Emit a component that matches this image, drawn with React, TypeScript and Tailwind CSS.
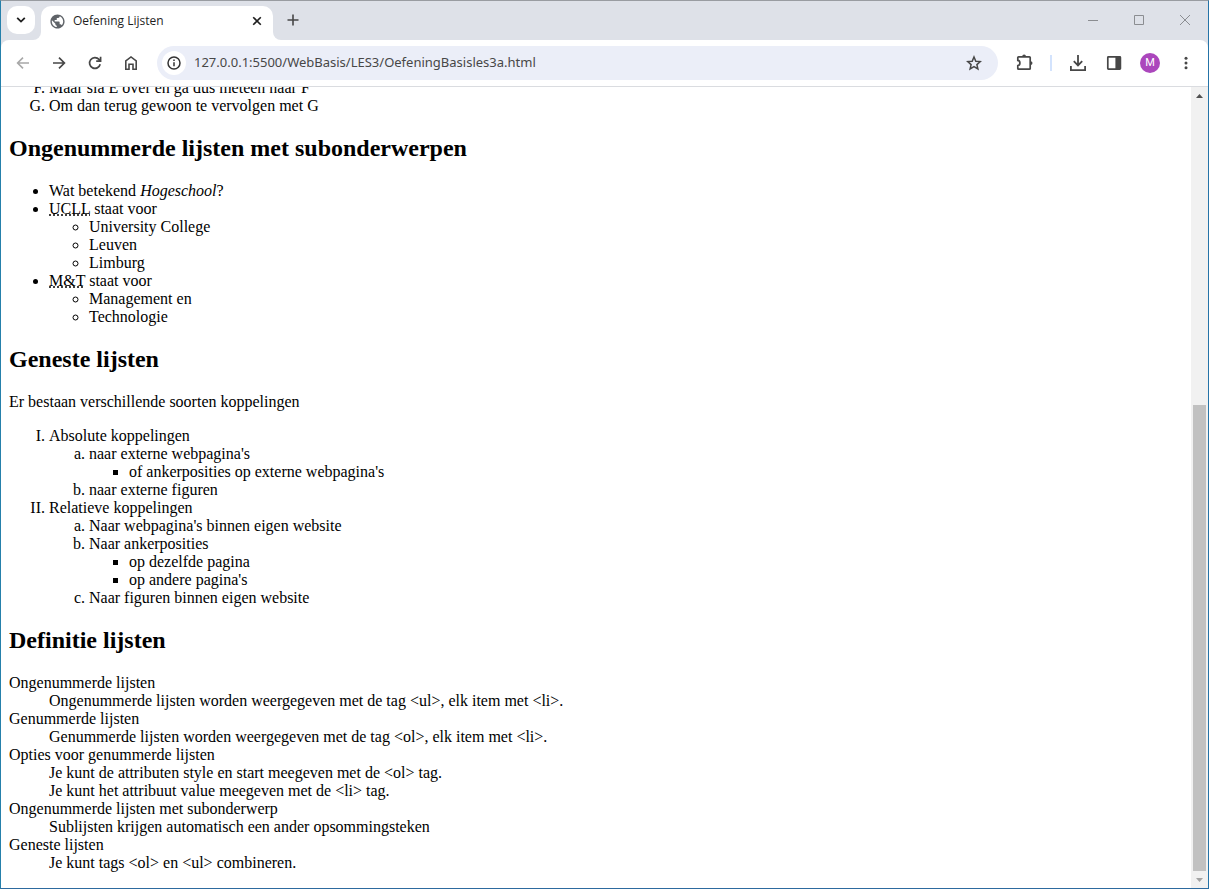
import type { ReactNode } from 'react'
import { MdPublic } from 'react-icons/md'

function IconButton({ label, className = '', children }: { label: string; className?: string; children: ReactNode }) {
  return (
    <button type="button" aria-label={label} className={`flex size-7 shrink-0 items-center justify-center ${className}`}>
      {children}
    </button>
  )
}

function TabStrip() {
  return (
    <header className="flex h-[39px] shrink-0 items-stretch bg-[#dee1e8] text-[#1f1f1f]">
      <div className="w-10 shrink-0 bg-white">
        <div className="flex h-full justify-center rounded-br-lg bg-[#dee1e8] pt-[5px]">
          <button type="button" aria-label="Tabbladen zoeken" className="flex size-7 items-center justify-center rounded-[10px] bg-white">
            <svg width="10" height="6" viewBox="0 0 10 6" fill="none" stroke="currentColor" strokeWidth="1.8">
              <path d="M1.2 0.8 5 4.6 8.8 0.8" />
            </svg>
          </button>
        </div>
      </div>
      <div className="mt-[5px] flex w-[232px] items-center rounded-t-[10px] bg-white pr-2.5 pb-1 pl-2">
        <MdPublic size={17} color="#5f6368" />
        <span className="ml-[7px] flex-1 truncate font-['Open_Sans',sans-serif] text-xs">Oefening Lijsten</span>
        <button type="button" aria-label="Tabblad sluiten" className="flex size-3 items-center justify-center">
          <svg width="10" height="10" viewBox="0 0 10 10" stroke="currentColor" strokeWidth="1.6">
            <path d="M1.2 1.2 8.8 8.8M8.8 1.2 1.2 8.8" />
          </svg>
        </button>
      </div>
      <div className="flex-1 bg-white">
        <div className="flex h-full rounded-bl-lg bg-[#dee1e8]">
          <IconButton label="Nieuw tabblad" className="mt-[5px] ml-1.5">
            <svg width="12" height="12" viewBox="0 0 12 12" stroke="#474747" strokeWidth="1.6">
              <path d="M6 0.5V11.5M0.5 6H11.5" />
            </svg>
          </IconButton>
          <div className="ml-auto flex h-[38px] text-[#8b8d91]">
            <button type="button" aria-label="Minimaliseren" className="flex w-[46px] items-center justify-center">
              <svg width="10" height="10" viewBox="0 0 10 10" stroke="currentColor"><path d="M0 5.5H10" /></svg>
            </button>
            <button type="button" aria-label="Maximaliseren" className="flex w-[46px] items-center justify-center">
              <svg width="10" height="10" viewBox="0 0 10 10" fill="none" stroke="currentColor"><path d="M.5.5H9.5V9.5H.5Z" /></svg>
            </button>
            <button type="button" aria-label="Sluiten" className="flex w-[46px] items-center justify-center">
              <svg width="10" height="10" viewBox="0 0 10 10" stroke="currentColor"><path d="M0 0 10 10M10 0 0 10" /></svg>
            </button>
          </div>
        </div>
      </div>
    </header>
  )
}

function Toolbar() {
  return (
    <div className="bg-[#dee1e8]">
      <nav className="flex h-[47px] items-center rounded-t-lg border-b border-[#dadce0] bg-white px-2 text-[#474747]">
        <div className="flex shrink-0 gap-2">
          <IconButton label="Terug" className="text-[#a8a8a8]">
            <svg width="16" height="16" viewBox="0 0 16 16" fill="none" stroke="currentColor" strokeWidth="1.6">
              <path d="M14 8H2.8M8 2.6 2.6 8 8 13.4" />
            </svg>
          </IconButton>
          <IconButton label="Vooruit">
            <svg width="16" height="16" viewBox="0 0 16 16" fill="none" stroke="currentColor" strokeWidth="1.7">
              <path d="M2 8H13.2M8 2.6 13.4 8 8 13.4" />
            </svg>
          </IconButton>
          <IconButton label="Vernieuwen">
            <svg width="16" height="16" viewBox="0 0 16 16" fill="none" stroke="currentColor" strokeWidth="1.7">
              <path d="M13.2 9.3A5.4 5.4 0 1 1 12 4.4L13.4 5.9M13.6 1.8V6.2H9.2" />
            </svg>
          </IconButton>
          <IconButton label="Startpagina">
            <svg width="16" height="16" viewBox="0 0 16 16" fill="none" stroke="currentColor" strokeWidth="1.6">
              <path d="M2.8 14.2V5.9L8 1.9 13.2 5.9V14.2H10V9.2H6V14.2Z" />
            </svg>
          </IconButton>
        </div>
        <div className="ml-3 flex h-[34px] min-w-0 flex-1 items-center rounded-full bg-[#ebeef8] pr-2.5 pl-[5px]">
          <button type="button" aria-label="Sitegegevens bekijken" className="flex size-6 shrink-0 items-center justify-center rounded-full bg-white">
            <svg width="14" height="14" viewBox="0 0 14 14" fill="none" stroke="#333" strokeWidth="1.5">
              <circle cx="7" cy="7" r="6" />
              <path d="M7 6.2V10.2M7 3.6V5.1" />
            </svg>
          </button>
          <input
            type="text"
            aria-label="Adresbalk"
            defaultValue="127.0.0.1:5500/WebBasis/LES3/OefeningBasisles3a.html"
            className="ml-2 min-w-0 flex-1 bg-transparent font-['Noto_Sans',sans-serif] text-[13px] text-[#474747] outline-none"
          />
          <IconButton label="Bladwijzer toevoegen">
            <svg width="16" height="16" viewBox="0 0 16 16" fill="none" stroke="currentColor" strokeWidth="1.5">
              <path d="M8 2 9.8 6.2 14.3 6.6 10.9 9.6 11.9 14 8 11.7 4.1 14 5.1 9.6 1.7 6.6 6.2 6.2Z" />
            </svg>
          </IconButton>
        </div>
        <div className="ml-3 flex shrink-0 items-center">
          <IconButton label="Extensies">
            <svg width="18" height="18" viewBox="0 0 18 18" fill="none" stroke="currentColor" strokeWidth="1.7">
              <path d="M3.6 2.8H14.4Q15.2 2.8 15.2 3.6V14.4Q15.2 15.2 14.4 15.2H3.6Q2.8 15.2 2.8 14.4V11.7C5.6 11.3 5.6 6.8 2.8 6.4V3.6Q2.8 2.8 3.6 2.8Z" />
              <path d="M7.2 2.4A1.9 1.9 0 0 1 11 2.4ZM15.6 7.2A1.9 1.9 0 0 1 15.6 11Z" fill="currentColor" stroke="none" />
            </svg>
          </IconButton>
          <span className="mx-3 h-4 w-0.5 bg-[#d3e3fd]" />
          <div className="flex gap-2">
            <IconButton label="Downloads">
              <svg width="18" height="18" viewBox="0 0 18 18" fill="none" stroke="currentColor" strokeWidth="1.8">
                <path d="M9 1V11M4.8 7.2 9 11.4 13.2 7.2M1.9 12V16.1H16.1V12" />
              </svg>
            </IconButton>
            <IconButton label="Zijvenster">
              <svg width="16" height="16" viewBox="0 0 16 16" fill="none" stroke="currentColor" strokeWidth="1.7">
                <rect x="1.8" y="1.8" width="12.6" height="12.4" rx="0.6" />
                <path d="M9.4 2H14V14H9.4Z" fill="currentColor" stroke="none" />
              </svg>
            </IconButton>
            <IconButton label="Profiel">
              <span className="flex size-5 items-center justify-center rounded-full bg-[#ab47bc] font-[Roboto,sans-serif] text-[11px] text-white">M</span>
            </IconButton>
            <IconButton label="Menu">
              <svg width="16" height="16" viewBox="0 0 16 16" fill="currentColor">
                <circle cx="8" cy="3.2" r="1.5" />
                <circle cx="8" cy="8" r="1.5" />
                <circle cx="8" cy="12.8" r="1.5" />
              </svg>
            </IconButton>
          </div>
        </div>
      </nav>
    </div>
  )
}

function Heading({ children }: { children: ReactNode }) {
  return <h2 className="my-5 text-2xl leading-[27px] font-bold">{children}</h2>
}

function Document() {
  return (
    <article className="px-2 pb-4 font-['Liberation_Serif',serif] text-base leading-[18px] text-black">
      <ol start={6} className="list-[upper-alpha] pl-10">
        <li>Maar sla E over en ga dus meteen naar F</li>
        <li>Om dan terug gewoon te vervolgen met G</li>
      </ol>

      <Heading>Ongenummerde lijsten met subonderwerpen</Heading>
      <ul className="list-disc pl-10">
        <li>Wat betekend <em>Hogeschool</em>?</li>
        <li>
          <abbr title="University College Leuven Limburg">UCLL</abbr> staat voor
          <ul className="list-[circle] pl-10">
            <li>University College</li>
            <li>Leuven</li>
            <li>Limburg</li>
          </ul>
        </li>
        <li>
          <abbr title="Management en Technologie">M&amp;T</abbr> staat voor
          <ul className="list-[circle] pl-10">
            <li>Management en</li>
            <li>Technologie</li>
          </ul>
        </li>
      </ul>

      <Heading>Geneste lijsten</Heading>
      <p className="mb-4">Er bestaan verschillende soorten koppelingen</p>
      <ol className="list-[upper-roman] pl-10">
        <li>
          Absolute koppelingen
          <ol className="list-[lower-alpha] pl-10">
            <li>
              naar externe webpagina's
              <ul className="list-[square] pl-10">
                <li>of ankerposities op externe webpagina's</li>
              </ul>
            </li>
            <li>naar externe figuren</li>
          </ol>
        </li>
        <li>
          Relatieve koppelingen
          <ol className="list-[lower-alpha] pl-10">
            <li>Naar webpagina's binnen eigen website</li>
            <li>
              Naar ankerposities
              <ul className="list-[square] pl-10">
                <li>op dezelfde pagina</li>
                <li>op andere pagina's</li>
              </ul>
            </li>
            <li>Naar figuren binnen eigen website</li>
          </ol>
        </li>
      </ol>

      <Heading>Definitie lijsten</Heading>
      <dl>
        <dt>Ongenummerde lijsten</dt>
        <dd className="ml-10">Ongenummerde lijsten worden weergegeven met de tag &lt;ul&gt;, elk item met &lt;li&gt;.</dd>
        <dt>Genummerde lijsten</dt>
        <dd className="ml-10">Genummerde lijsten worden weergegeven met de tag &lt;ol&gt;, elk item met &lt;li&gt;.</dd>
        <dt>Opties voor genummerde lijsten</dt>
        <dd className="ml-10">Je kunt de attributen style en start meegeven met de &lt;ol&gt; tag.</dd>
        <dd className="ml-10">Je kunt het attribuut value meegeven met de &lt;li&gt; tag.</dd>
        <dt>Ongenummerde lijsten met subonderwerp</dt>
        <dd className="ml-10">Sublijsten krijgen automatisch een ander opsommingsteken</dd>
        <dt>Geneste lijsten</dt>
        <dd className="ml-10">Je kunt tags &lt;ol&gt; en &lt;ul&gt; combineren.</dd>
      </dl>
    </article>
  )
}

function ScrollBar() {
  return (
    <div className="flex w-[17px] shrink-0 flex-col bg-[#f1f1f1]">
      <button type="button" aria-label="Omhoog scrollen" className="flex h-[17px] items-center justify-center">
        <svg width="7" height="4" viewBox="0 0 7 4" fill="#505050"><path d="M3.5 0 7 4H0Z" /></svg>
      </button>
      <div className="flex flex-1 flex-col px-0.5">
        <div className="flex-[301]" />
        <div className="flex-[466] bg-[#c1c1c1]" />
      </div>
      <button type="button" aria-label="Omlaag scrollen" className="flex h-[17px] items-center justify-center">
        <svg width="7" height="4" viewBox="0 0 7 4" fill="#a3a3a3"><path d="M0 0H7L3.5 4Z" /></svg>
      </button>
    </div>
  )
}

export default function App() {
  return (
    <div className="flex h-screen flex-col overflow-hidden border border-t-[#999ca1] border-r-[#2573a7] border-b-[#2d6a9f] border-l-[#2580ab] bg-white">
      <TabStrip />
      <Toolbar />
      <div className="flex min-h-0 flex-1">
        <main className="flex min-w-0 flex-1 flex-col justify-end overflow-hidden">
          <Document />
        </main>
        <ScrollBar />
      </div>
    </div>
  )
}
